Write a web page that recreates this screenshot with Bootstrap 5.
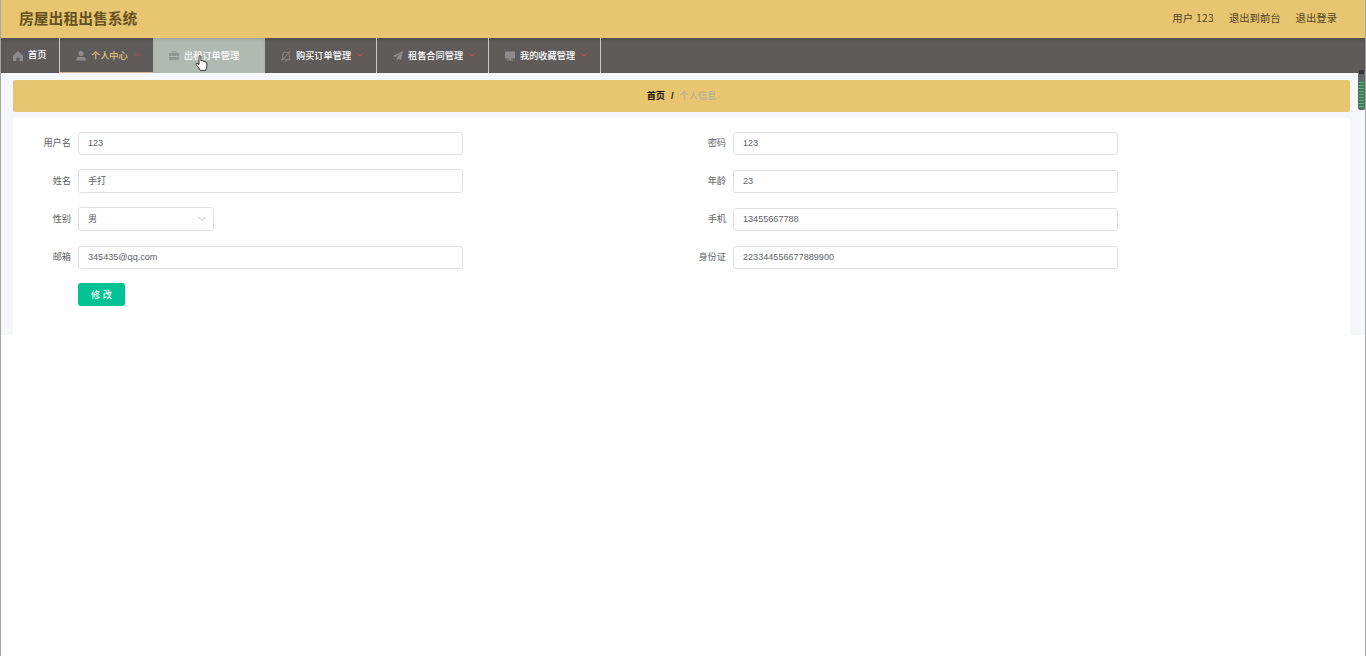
<!DOCTYPE html>
<html lang="zh-CN">
<head>
<meta charset="utf-8">
<meta name="viewport" content="width=device-width, initial-scale=1">
<title>房屋出租出售系统</title>
<link rel="stylesheet" href="https://cdn.jsdelivr.net/npm/bootstrap@5.3.0/dist/css/bootstrap.min.css">
<style>
body{font-family:"Liberation Sans","Noto Sans CJK SC",sans-serif;font-size:9.2px;line-height:1.4;color:#606266;background:#fefefe;height:656px;overflow:hidden;border-left:1px solid #a5a5a8;border-right:1px solid #a5a5a8}
.top-bar{height:38px;background:#e7c571;padding:0 28px 0 18px;color:#55431f}
.brand-title{font-size:14.8px;font-weight:700;color:#66501f;line-height:1}
.top-links{gap:15px;font-size:10.35px;font-family:"Noto Sans CJK SC",sans-serif;line-height:1;margin-top:-1px}
.top-links span{letter-spacing:.25px}
.top-links a{color:#54431f}
.main-menu{height:35px;background:#5f5b5b;flex-wrap:nowrap;box-shadow:inset 0 2px 3px rgba(0,0,0,.14)}
.main-menu .nav-link{height:35px;padding:1px 0 0 15px;border-right:1px solid #c9c7c7;color:#fff;font-weight:500;width:112px;border-radius:0;display:flex;align-items:center;white-space:nowrap}
.main-menu .home-link{width:59px;padding-left:11px;padding-top:0}
.main-menu .own-link{width:93px;color:#e6c570;border-right:0;box-shadow:inset 0 -1px #cbb195}
.main-menu .hover-link{background:#b0bab3;border-right:0;box-shadow:inset 0 2px 3px rgba(0,0,0,.1)}
.menu-icon{width:12px;height:12px;fill:#8e8b8f;margin:0 4px 0 0;flex:none}
.hover-link .menu-icon{fill:#909894}
.menu-arrow{width:8px;height:6px;flex:none;fill:none;stroke:#c04a54;stroke-width:1.2;margin-left:5px;margin-top:-2px;overflow:visible}
.own-link .menu-arrow{stroke:#a04a50}
.page-area{height:262px;background:#f6f7fb;padding:7px 15px 0 12px}
.crumbs{height:32px;background:#e7c571;border-radius:2px;margin-bottom:6px;gap:6px}
.crumbs b{color:#1b1608}
.crumbs span{color:#aaaaa8}
.form-card{height:217px;background:#fefefe;padding-top:14px}
.form-col{width:655px}
.field{height:23px;margin-bottom:15px}
.field.tall{height:24px;margin-bottom:14px}
.field.first{margin-bottom:14px}
.field.tall+.field{margin-top:15px}
.field label{width:58px;text-align:right;margin-right:7px}
.field .form-control,.field .form-select{width:385px;height:100%;min-height:0;padding:0 9px 2px;border:1px solid #dfe1e6;border-radius:3px;font-size:9.1px;line-height:19px;color:#606266;background-color:#fefefe}
.field .sex-select{width:136px;padding:0 7px 0 9px;display:flex;justify-content:space-between;align-items:center;background-image:none}
.save-btn{width:47px;height:23px;margin-left:65px;padding:0;border:0;border-radius:3px;background:#00c292;color:#fff;font-size:9.2px;font-weight:500;display:block;line-height:22px;margin-top:-1px}
.hand-cursor{position:absolute;left:195px;top:55px;width:13px;height:16px}
.side-meter{position:absolute;left:1358px;top:70px;width:7px;height:40px;border-radius:2px;border:1px solid #62666a;border-top:4px solid #34363b;background:linear-gradient(#626568 0 7px,transparent 7px),repeating-linear-gradient(#338555 0 2px,#67ad80 2px 3px)}
</style>
</head>
<body>
<header class="top-bar d-flex justify-content-between align-items-center">
  <div class="brand-title">房屋出租出售系统</div>
  <div class="top-links d-flex"><span>用户 123</span><a href="#" class="text-decoration-none">退出到前台</a><a href="#" class="text-decoration-none">退出登录</a></div>
</header>
<nav class="main-menu nav">
  <a class="nav-link home-link" href="#"><svg class="menu-icon" viewBox="0 0 12 12"><path d="M6 1 1 5.8V11h3.400V7.500h3.200V11H11V5.800z"/></svg>首页</a>
  <a class="nav-link own-link" href="#"><svg class="menu-icon" viewBox="0 0 12 12"><circle cx="6" cy="3.600" r="2.500"/><path d="M1.300 10.500V8.700Q1.500 7 4 7h4q2.500 0 2.700 1.700v1.800z"/></svg>个人中心<svg class="menu-arrow" viewBox="0 0 8 6"><path d="M1 1.500 4 4 7 1.500"/></svg></a>
  <a class="nav-link hover-link" href="#"><svg class="menu-icon" viewBox="0 0 12 12"><path d="M3.500 3V1.300h5V3H11v3H1V3zm1 0h3v-.8h-3zM1 7h10v3.300H1z"/></svg>出租订单管理</a>
  <a class="nav-link" href="#"><svg class="menu-icon" viewBox="0 0 12 12"><path fill="none" stroke="#8e8b8f" stroke-width=".9" d="M2.700 9V4.800Q3 2 6 2t3.300 2.800V9M1 9.300h10M1.300 10.800 10.500 1M4.800 10.800h2.400"/></svg>购买订单管理<svg class="menu-arrow" viewBox="0 0 8 6"><path d="M1 1.500 4 4 7 1.500"/></svg></a>
  <a class="nav-link" href="#"><svg class="menu-icon" viewBox="0 0 12 12"><path d="M11 1 .8 6l2.700 1.200L9 3 4.700 7.800V11l1.700-2.200L9 10z"/></svg>租售合同管理<svg class="menu-arrow" viewBox="0 0 8 6"><path d="M1 1.500 4 4 7 1.500"/></svg></a>
  <a class="nav-link" href="#"><svg class="menu-icon" viewBox="0 0 12 12"><path d="M1 1.500h10v7H7v1h2v1H3v-1h2v-1H1z"/></svg>我的收藏管理<svg class="menu-arrow" viewBox="0 0 8 6"><path d="M1 1.500 4 4 7 1.500"/></svg></a>
</nav>
<main class="page-area">
  <div class="crumbs d-flex justify-content-center align-items-center"><b>首页</b><b>/</b><span>个人信息</span></div>
  <form class="form-card d-flex">
    <div class="form-col">
      <div class="field first d-flex align-items-center"><label>用户名</label><input class="form-control" value="123"></div>
      <div class="field tall d-flex align-items-center"><label>姓名</label><input class="form-control" value="手打"></div>
      <div class="field tall mt-0 d-flex align-items-center"><label>性别</label><div class="form-select sex-select"><span>男</span><svg width="8" height="6" viewBox="0 0 8 6" fill="none" stroke="#c0c4cc"><path d="m.7 1 3.300 3.500L7.300 1"/></svg></div></div>
      <div class="field d-flex align-items-center"><label>邮箱</label><input class="form-control" value="345435@qq.com"></div>
      <button type="button" class="btn save-btn">修 改</button>
    </div>
    <div class="form-col">
      <div class="field d-flex align-items-center"><label>密码</label><input class="form-control" value="123"></div>
      <div class="field d-flex align-items-center"><label>年龄</label><input class="form-control" value="23"></div>
      <div class="field d-flex align-items-center"><label>手机</label><input class="form-control" value="13455667788"></div>
      <div class="field d-flex align-items-center"><label>身份证</label><input class="form-control" value="223344556677889900"></div>
    </div>
  </form>
</main>
<svg class="hand-cursor" viewBox="0 0 13 16"><path fill="#fff" stroke="#222" stroke-width=".9" d="M4 9.500V1.800Q4 .7 4.900.7t1 1.100v4Q7.700 5 8 6.300q1.500-.5 1.900.6 1.800-.3 1.900 1.100v3.200q0 1.800-1.300 4.200H5.200Q4 12.800 1.300 9.700.7 8.300 2 8.200q1 .2 2 1.300z"/></svg>
<div class="side-meter"></div>
<script src="https://cdn.jsdelivr.net/npm/bootstrap@5.3.0/dist/js/bootstrap.bundle.min.js"></script>
</body>
</html>
